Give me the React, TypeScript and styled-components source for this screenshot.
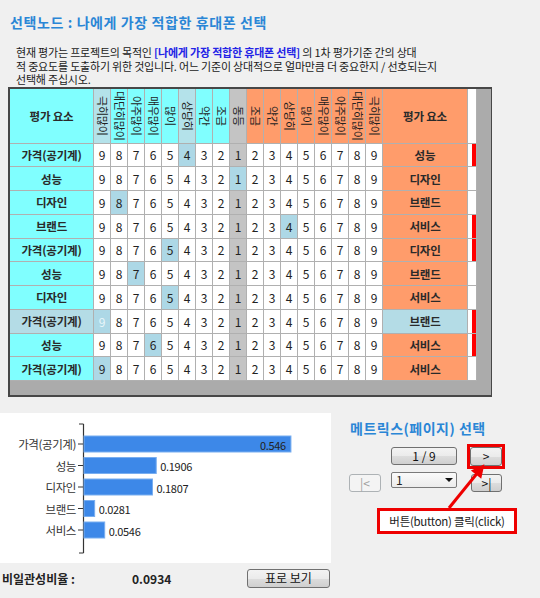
import React from 'react'
import styled, { createGlobalStyle } from 'styled-components'

const GlobalStyle = createGlobalStyle`
  html, body {
    margin: 0;
    padding: 0;
    background: #f0f0f0;
  }
  body {
    font-family: "Noto Sans CJK KR", "Noto Sans", sans-serif;
  }
`

const CYAN = '#80ffff'
const ORANGE = '#ff9c6b'
const PICK = '#add8e6'
const GRAY = '#c4c4c4'
const LINE = '#b0b0b0'
const BLUE_TITLE = '#2a86d6'

const Page = styled.div`
  width: 540px;
  height: 598px;
  overflow: hidden;
  background: #f0f0f0;
  color: #222;
  padding-top: 13px;
  box-sizing: border-box;
`

const Title = styled.h1`
  margin: 0 0 0 10px;
  font-size: 14px;
  line-height: 18px;
  font-weight: bold;
  letter-spacing: 0.6px;
  color: ${BLUE_TITLE};
`

const Desc = styled.p`
  margin: 15px 0 0 16px;
  font-size: 11px;
  line-height: 13.5px;
  letter-spacing: -0.2px;
  color: #1a1a1a;
`

const Goal = styled.b`
  color: #2424e6;
`

const Frame = styled.div`
  margin-left: 8px;
  width: 484px;
  height: 310px;
  box-sizing: border-box;
  border: 2px solid #474747;
  border-width: 2px 1px 2px 2px;
  background: #ababab;
`

const Grid = styled.div`
  display: grid;
  grid-template-columns: 84px repeat(17, 17px) 85px 9px;
  grid-template-rows: 55px repeat(10, 23.75px);
  width: 467px;
  background: #fff;
`

const Cell = styled.div<{ $bg?: string; $bold?: boolean; $fg?: string }>`
  box-sizing: border-box;
  border-right: 1px solid ${LINE};
  border-bottom: 1px solid ${LINE};
  background: ${(p) => p.$bg || '#fff'};
  color: ${(p) => p.$fg || (p.$bold ? '#2a2a2a' : '#222')};
  display: flex;
  align-items: center;
  justify-content: center;
  font-size: ${(p) => (p.$bold ? '11.5px' : '12px')};
  font-weight: ${(p) => (p.$bold ? 'bold' : 'normal')};
  letter-spacing: ${(p) => (p.$bold ? '-0.2px' : '0')};
  white-space: nowrap;
`

const VText = styled.span`
  writing-mode: vertical-rl;
  text-orientation: sideways;
  font-size: 11px;
  line-height: 13px;
  letter-spacing: -0.2px;
`

const Marker = styled.div<{ $on?: boolean }>`
  box-sizing: border-box;
  border-right: 1px solid ${LINE};
  border-bottom: 1px solid ${LINE};
  background: #fff;
  display: flex;
  justify-content: flex-end;
  &::after {
    content: '';
    width: 4px;
    background: ${(p) => (p.$on ? '#f00' : 'transparent')};
  }
`

const Bottom = styled.div`
  display: grid;
  grid-template-columns: 332px 1fr;
  margin-top: 16px;
`

const ChartPanel = styled.div`
  width: 331px;
  height: 150px;
  background: #fff;
`

const Footer = styled.div`
  display: flex;
  align-items: center;
  height: 31px;
  padding-left: 2px;
  font-size: 12px;
  font-weight: bold;
`

const FooterLabel = styled.span`
  width: 130px;
`

const FooterValue = styled.span`
  width: 115px;
`

const WinButton = styled.button<{ $w: number; $h?: number }>`
  width: ${(p) => p.$w}px;
  height: ${(p) => p.$h || 18}px;
  padding: 0;
  border: 1px solid #707070;
  border-radius: 3px;
  background: linear-gradient(#f3f3f3 0%, #ebebeb 50%, #dddddd 51%, #cfcfcf 100%);
  font-family: inherit;
  font-size: 12px;
  font-weight: normal;
  color: #111;
  line-height: 1;
  &:disabled {
    border-color: #adb2b5;
    background: #f4f4f4;
    color: #a0a0a0;
  }
`

const Side = styled.div`
  position: relative;
  padding-top: 6px;
`

const SideTitle = styled.h2`
  margin: 0 0 0 18px;
  font-size: 14px;
  line-height: 18px;
  font-weight: bold;
  color: ${BLUE_TITLE};
  letter-spacing: 0.5px;
`

const Controls = styled.div`
  display: grid;
  grid-template-columns: 32px 66px 38px;
  grid-template-rows: 25px 20px;
  column-gap: 10px;
  row-gap: 3px;
  margin: 7px 0 0 17px;
  align-items: start;
`

const Highlight = styled.div`
  grid-column: 3;
  border: 3px solid #ee0000;
  width: 38px;
  height: 25px;
  box-sizing: border-box;
  display: flex;
`

const Select = styled.div`
  grid-column: 2;
  height: 16px;
  box-sizing: border-box;
  border: 1px solid #7a7a7a;
  border-radius: 2px;
  background: linear-gradient(#fafafa, #ececec);
  display: flex;
  align-items: center;
  justify-content: space-between;
  padding: 0 3px 0 4px;
  font-size: 12px;
`

const Caret = styled.span`
  width: 0;
  height: 0;
  border-left: 4px solid transparent;
  border-right: 4px solid transparent;
  border-top: 4px solid #111;
`

const Callout = styled.div`
  margin: 16px 0 0 45px;
  width: 140px;
  height: 26px;
  box-sizing: border-box;
  border: 3px solid #ee0000;
  background: #fff;
  display: flex;
  align-items: center;
  justify-content: center;
  font-size: 11.5px;
  letter-spacing: -0.3px;
  white-space: nowrap;
`

const ArrowLayer = styled.svg`
  position: absolute;
  left: 0;
  top: 0;
  pointer-events: none;
`

const LEFT_HEAD = ['극히많이', '대단히많이', '아주많이', '매우많이', '많이', '상당히', '약간', '조금']
const HEADS = [...LEFT_HEAD, '동등', ...[...LEFT_HEAD].reverse()]
const NUMS = [9, 8, 7, 6, 5, 4, 3, 2, 1, 2, 3, 4, 5, 6, 7, 8, 9]

type Row = { left: string; right: string; pick: number; mark?: boolean; selected?: boolean }

const ROWS: Row[] = [
  { left: '가격(공기계)', right: '성능', pick: 5, mark: true },
  { left: '성능', right: '디자인', pick: 8 },
  { left: '디자인', right: '브랜드', pick: 1 },
  { left: '브랜드', right: '서비스', pick: 11, mark: true },
  { left: '가격(공기계)', right: '디자인', pick: 4, mark: true },
  { left: '성능', right: '브랜드', pick: 2 },
  { left: '디자인', right: '서비스', pick: 4 },
  { left: '가격(공기계)', right: '브랜드', pick: 0, mark: true, selected: true },
  { left: '성능', right: '서비스', pick: 3, mark: true },
  { left: '가격(공기계)', right: '서비스', pick: 0 },
]

const headBg = (i: number) => {
  if (i === 8) return GRAY
  if (i === 0 || i === 5) return '#b4e2ea'
  return i < 8 ? CYAN : ORANGE
}

const WEIGHTS = [
  { name: '가격(공기계)', v: 0.546 },
  { name: '성능', v: 0.1906 },
  { name: '디자인', v: 0.1807 },
  { name: '브랜드', v: 0.0281 },
  { name: '서비스', v: 0.0546 },
]

const Chart = () => {
  const axisX = 83.5
  const scale = 379
  return (
    <svg width={331} height={150} style={{ display: 'block' }}>
      <line x1={axisX} y1={11} x2={axisX} y2={140} stroke="#333" strokeWidth={1.2} />
      <line x1={79} y1={11} x2={axisX} y2={11} stroke="#333" />
      <line x1={79} y1={140} x2={axisX} y2={140} stroke="#333" />
      {WEIGHTS.map((w, i) => {
        const cy = 31 + i * 21.5
        const bw = w.v * scale
        const inside = bw > 100
        return (
          <g key={w.name}>
            <line x1={78} y1={cy} x2={axisX} y2={cy} stroke="#333" />
            <text
              x={76}
              y={cy}
              textAnchor="end"
              dominantBaseline="central"
              fontSize={11.5}
              letterSpacing={-0.4}
              fill="#333"
            >
              {w.name}
            </text>
            <rect x={84} y={cy - 8} width={bw} height={16} fill="#3d88e8" stroke="#79aef0" strokeWidth={1} />
            <text
              x={inside ? 84 + bw - 5 : 84 + bw + 4}
              y={cy + 0.5}
              textAnchor={inside ? 'end' : 'start'}
              dominantBaseline="central"
              fontSize={11}
              letterSpacing={-0.3}
              fill="#222"
            >
              {w.v}
            </text>
          </g>
        )
      })}
    </svg>
  )
}

const App: React.FC = () => {
  return (
    <Page>
      <GlobalStyle />
      <Title>선택노드 : 나에게 가장 적합한 휴대폰 선택</Title>
      <Desc>
        현재 평가는 프로젝트의 목적인 <Goal>[나에게 가장 적합한 휴대폰 선택]</Goal> 의 1차 평가기준 간의 상대
        <br />
        적 중요도를 도출하기 위한 것입니다. 어느 기준이 상대적으로 얼마만큼 더 중요한지 / 선호되는지
        <br />
        선택해 주십시오.
      </Desc>

      <Frame>
        <Grid>
          <Cell $bg={CYAN} $bold>
            평가 요소
          </Cell>
          {HEADS.map((h, i) => (
            <Cell key={'h' + i} $bg={headBg(i)}>
              <VText>{h}</VText>
            </Cell>
          ))}
          <Cell $bg={ORANGE} $bold>
            평가 요소
          </Cell>
          <Marker />

          {ROWS.map((r, ri) => (
            <React.Fragment key={ri}>
              <Cell $bg={r.selected ? '#b4dce6' : CYAN} $bold>
                {r.left}
              </Cell>
              {NUMS.map((n, ci) => {
                const picked = ci === r.pick
                let bg = ci === 8 ? GRAY : '#fff'
                if (picked) bg = PICK
                return (
                  <Cell key={ci} $bg={bg} $fg={picked && r.selected ? '#e8f6fa' : undefined}>
                    {n}
                  </Cell>
                )
              })}
              <Cell $bg={r.selected ? '#b4dce6' : ORANGE} $bold>
                {r.right}
              </Cell>
              <Marker $on={r.mark} />
            </React.Fragment>
          ))}
        </Grid>
      </Frame>

      <Bottom>
        <div>
          <ChartPanel>
            <Chart />
          </ChartPanel>
          <Footer>
            <FooterLabel>비일관성비율 :</FooterLabel>
            <FooterValue>0.0934</FooterValue>
            <WinButton $w={83} $h={19}>
              표로 보기
            </WinButton>
          </Footer>
        </div>

        <Side>
          <SideTitle>메트릭스(페이지) 선택</SideTitle>
          <Controls>
            <span />
            <WinButton $w={66} $h={18} style={{ marginTop: 3 }}>
              1 / 9
            </WinButton>
            <Highlight>
              <WinButton $w={32} $h={19}>
                &gt;
              </WinButton>
            </Highlight>
            <WinButton $w={32} $h={18} disabled style={{ marginTop: 2 }}>
              |&lt;
            </WinButton>
            <Select>
              <span>1</span>
              <Caret />
            </Select>
            <WinButton $w={31} $h={18} style={{ marginTop: 2, marginLeft: 4 }}>
              &gt;|
            </WinButton>
          </Controls>
          <Callout>버튼(button) 클릭(click)</Callout>
          <ArrowLayer width={208} height={183}>
            <line x1={117} y1={95} x2={145} y2={60.5} stroke="#ee0000" strokeWidth={3} />
            <polygon points="151,53 148.6,63.9 140.8,57.7" fill="#ee0000" stroke="#ee0000" strokeWidth={2} />
          </ArrowLayer>
        </Side>
      </Bottom>
    </Page>
  )
}

export default App
